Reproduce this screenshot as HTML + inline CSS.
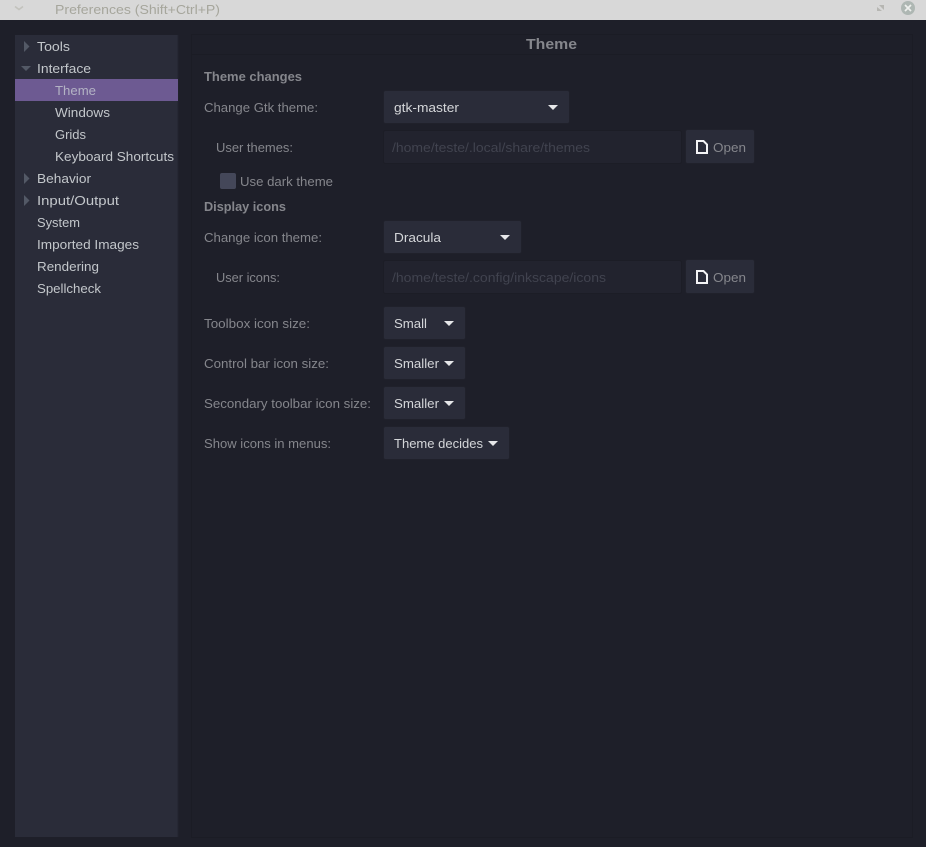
<!DOCTYPE html>
<html>
<head>
<meta charset="utf-8">
<title>Preferences</title>
<style>
html,body{margin:0;padding:0;background:#1e1f29;width:926px;height:847px;overflow:hidden}
svg{display:block}
text{font-family:"Liberation Sans",sans-serif;font-size:13px}
.s{fill:#c3c7cb}
.l{fill:#85868c}
.b{fill:#85868c;font-weight:bold}
.w{fill:#d4d6d9}
.p{fill:#41434f}
.o{fill:#85868c}
.btn{fill:#2a2c39;stroke:#20212b;stroke-width:1}
.ent{fill:#22232e;stroke:#1c1d26;stroke-width:1}
</style>
</head>
<body>
<svg width="926" height="847" viewBox="0 0 926 847" xmlns="http://www.w3.org/2000/svg">
<rect width="926" height="847" fill="#1e1f29"/>
<!-- title bar -->
<rect width="926" height="20" fill="#d8d8d8"/>
<path d="M15 6.500l4 3 4-3" fill="none" stroke="#c2c2bc" stroke-width="1.500"/>
<text x="55" y="14" textLength="165" lengthAdjust="spacingAndGlyphs" fill="#a6a69c">Preferences (Shift+Ctrl+P)</text>
<path d="M879 5h5v5zM877 7l5 4h-5z" fill="#b6b6b2"/>
<circle cx="908" cy="8" r="7" fill="#aeb7b3"/>
<path d="M905 5l6 6M911 5l-6 6" stroke="#eef0ee" stroke-width="1.700"/>

<!-- sidebar -->
<rect x="15" y="35" width="163" height="802" fill="#2a2c39"/>
<rect x="177.500" y="35" width="1" height="802" fill="#22232e"/>
<rect x="15" y="79" width="163" height="22" fill="#6d5a92"/>
<path d="M24 41l5.500 5.500-5.500 5.500z" fill="#535966"/>
<path d="M21 66h10l-5 5z" fill="#535966"/>
<path d="M24 173l5.500 5.500-5.500 5.500z" fill="#535966"/>
<path d="M24 195l5.500 5.500-5.500 5.500z" fill="#535966"/>
<text class="s" x="37" y="51" textLength="33" lengthAdjust="spacingAndGlyphs">Tools</text>
<text class="s" x="37" y="73" textLength="54" lengthAdjust="spacingAndGlyphs">Interface</text>
<text x="55" y="95" textLength="41" lengthAdjust="spacingAndGlyphs" fill="#b3b3c4">Theme</text>
<text class="s" x="55" y="117" textLength="55" lengthAdjust="spacingAndGlyphs">Windows</text>
<text class="s" x="55" y="139" textLength="31" lengthAdjust="spacingAndGlyphs">Grids</text>
<text class="s" x="55" y="161" textLength="119" lengthAdjust="spacingAndGlyphs">Keyboard Shortcuts</text>
<text class="s" x="37" y="183" textLength="54" lengthAdjust="spacingAndGlyphs">Behavior</text>
<text class="s" x="37" y="205" textLength="82" lengthAdjust="spacingAndGlyphs">Input/Output</text>
<text class="s" x="37" y="227" textLength="43" lengthAdjust="spacingAndGlyphs">System</text>
<text class="s" x="37" y="249" textLength="102" lengthAdjust="spacingAndGlyphs">Imported Images</text>
<text class="s" x="37" y="271" textLength="62" lengthAdjust="spacingAndGlyphs">Rendering</text>
<text class="s" x="37" y="293" textLength="64" lengthAdjust="spacingAndGlyphs">Spellcheck</text>

<!-- right panel -->
<rect x="191.500" y="34.500" width="721" height="803" fill="none" stroke="#1b1c25"/>
<rect x="192" y="54" width="720" height="1" fill="#1b1c25"/>
<text x="526" y="49" textLength="51" lengthAdjust="spacingAndGlyphs" fill="#85868c" style="font-size:15px;font-weight:bold">Theme</text>

<text class="b" x="204" y="81" textLength="98" lengthAdjust="spacingAndGlyphs">Theme changes</text>
<text class="l" x="204" y="112" textLength="114" lengthAdjust="spacingAndGlyphs">Change Gtk theme:</text>
<rect class="btn" x="383.500" y="90.500" width="186" height="33" rx="2"/>
<text class="w" x="394" y="112" textLength="65" lengthAdjust="spacingAndGlyphs">gtk-master</text>
<path d="M548 105h10l-5 5z" fill="#e6e7e9"/>

<text class="l" x="216" y="152" textLength="77" lengthAdjust="spacingAndGlyphs">User themes:</text>
<rect class="ent" x="383.500" y="130.500" width="298" height="33" rx="2"/>
<text class="p" x="392" y="152" textLength="198" lengthAdjust="spacingAndGlyphs">/home/teste/.local/share/themes</text>
<rect class="btn" x="685.500" y="129.500" width="69" height="34" rx="2"/>
<path d="M697 141h6.500l3.500 3.500v8.500h-10z" fill="none" stroke="#f4f4f6" stroke-width="2"/>
<text class="o" x="713" y="152" textLength="33" lengthAdjust="spacingAndGlyphs">Open</text>

<rect x="220" y="173" width="16" height="16" rx="2" fill="#444759"/>
<text class="l" x="240" y="186" textLength="93" lengthAdjust="spacingAndGlyphs">Use dark theme</text>
<text class="b" x="204" y="211" textLength="82" lengthAdjust="spacingAndGlyphs">Display icons</text>

<text class="l" x="204" y="242" textLength="118" lengthAdjust="spacingAndGlyphs">Change icon theme:</text>
<rect class="btn" x="383.500" y="220.500" width="138" height="33" rx="2"/>
<text class="w" x="394" y="242" textLength="47" lengthAdjust="spacingAndGlyphs">Dracula</text>
<path d="M500 235h10l-5 5z" fill="#e6e7e9"/>

<text class="l" x="216" y="282" textLength="64" lengthAdjust="spacingAndGlyphs">User icons:</text>
<rect class="ent" x="383.500" y="260.500" width="298" height="33" rx="2"/>
<text class="p" x="392" y="282" textLength="214" lengthAdjust="spacingAndGlyphs">/home/teste/.config/inkscape/icons</text>
<rect class="btn" x="685.500" y="259.500" width="69" height="34" rx="2"/>
<path d="M697 271h6.500l3.500 3.500v8.500h-10z" fill="none" stroke="#f4f4f6" stroke-width="2"/>
<text class="o" x="713" y="282" textLength="33" lengthAdjust="spacingAndGlyphs">Open</text>

<text class="l" x="204" y="328" textLength="106" lengthAdjust="spacingAndGlyphs">Toolbox icon size:</text>
<rect class="btn" x="383.500" y="306.500" width="82" height="33" rx="2"/>
<text class="w" x="394" y="328" textLength="33" lengthAdjust="spacingAndGlyphs">Small</text>
<path d="M444 321h10l-5 5z" fill="#e6e7e9"/>

<text class="l" x="204" y="368" textLength="125" lengthAdjust="spacingAndGlyphs">Control bar icon size:</text>
<rect class="btn" x="383.500" y="346.500" width="82" height="33" rx="2"/>
<text class="w" x="394" y="368" textLength="45" lengthAdjust="spacingAndGlyphs">Smaller</text>
<path d="M444 361h10l-5 5z" fill="#e6e7e9"/>

<text class="l" x="204" y="408" textLength="167" lengthAdjust="spacingAndGlyphs">Secondary toolbar icon size:</text>
<rect class="btn" x="383.500" y="386.500" width="82" height="33" rx="2"/>
<text class="w" x="394" y="408" textLength="45" lengthAdjust="spacingAndGlyphs">Smaller</text>
<path d="M444 401h10l-5 5z" fill="#e6e7e9"/>

<text class="l" x="204" y="448" textLength="127" lengthAdjust="spacingAndGlyphs">Show icons in menus:</text>
<rect class="btn" x="383.500" y="426.500" width="126" height="33" rx="2"/>
<text class="w" x="394" y="448" textLength="89" lengthAdjust="spacingAndGlyphs">Theme decides</text>
<path d="M488 441h10l-5 5z" fill="#e6e7e9"/>
</svg>
</body>
</html>
